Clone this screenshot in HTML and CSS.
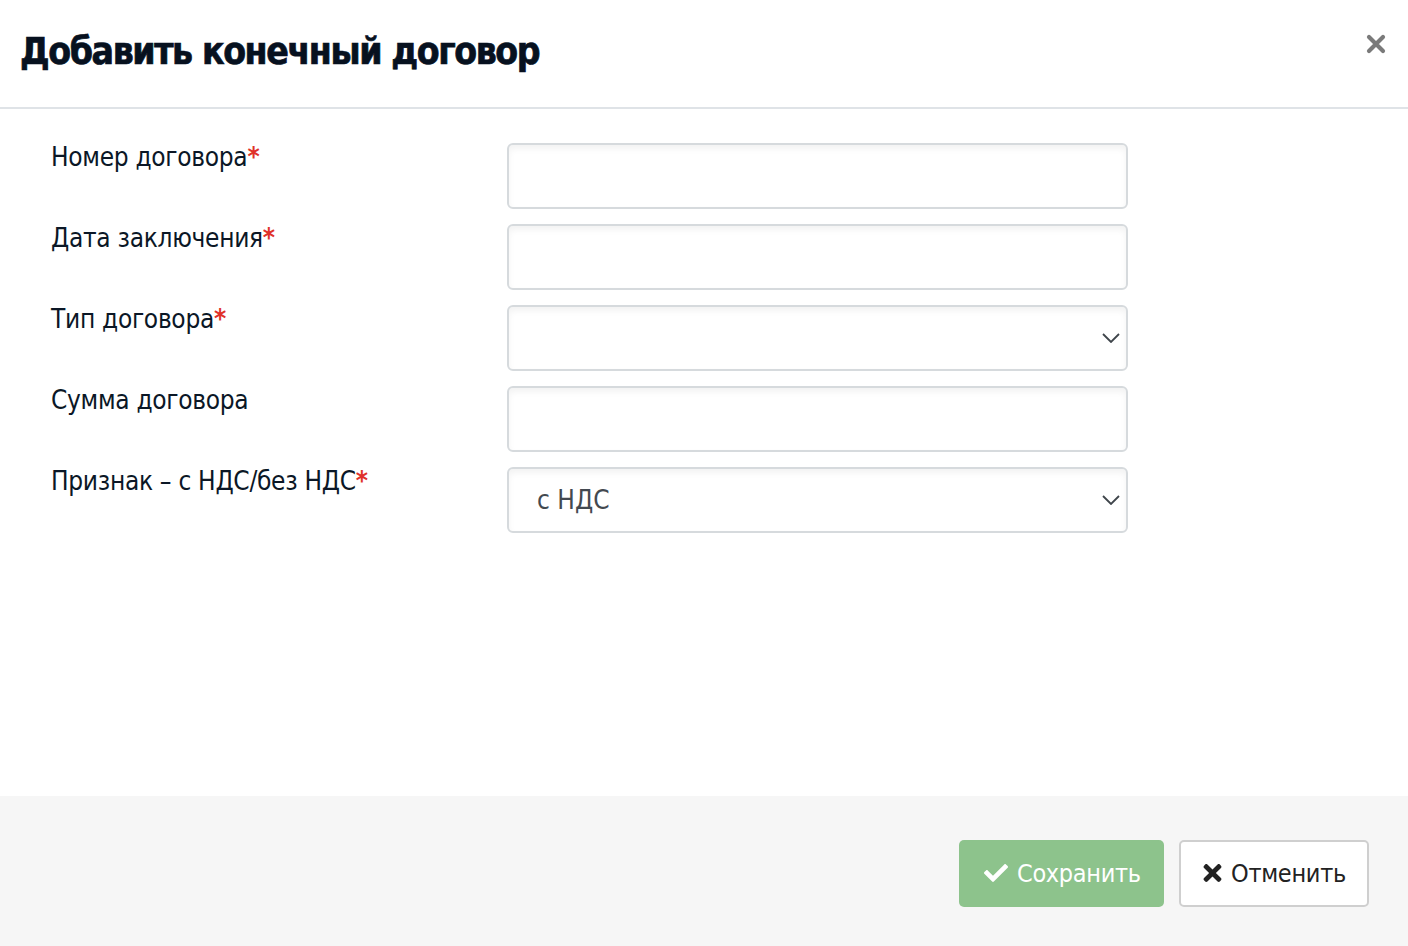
FILE: index.html
```html
<!DOCTYPE html>
<html lang="ru">
<head>
<meta charset="utf-8">
<link rel="stylesheet" href="styles.css">
</head>
<body>
<div class="modal">
  <div class="header">
    <h1 class="title">Добавить конечный договор</h1>
    <button class="close" aria-label="Закрыть">
      <svg viewBox="0 0 20 20" width="20" height="20"><path d="M3 3L17 17M17 3L3 17" stroke="#7a7a7a" stroke-width="4.2" stroke-linecap="round"/></svg>
    </button>
  </div>
  <div class="body">
    <div class="form">
      <label class="label">Номер договора<span class="req">*</span></label>
      <input class="control" type="text">
      <label class="label">Дата заключения<span class="req">*</span></label>
      <input class="control" type="text">
      <label class="label">Тип договора<span class="req">*</span></label>
      <div class="select-wrap">
        <select class="control select"><option></option></select>
        <svg class="chev" viewBox="0 0 18 10" width="18" height="10"><path d="M1 1L9 9L17 1" fill="none" stroke="#3f454b" stroke-width="1.8"/></svg>
      </div>
      <label class="label">Сумма договора</label>
      <input class="control" type="text">
      <label class="label">Признак – с НДС/без НДС<span class="req">*</span></label>
      <div class="select-wrap">
        <select class="control select"><option>с НДС</option></select>
        <svg class="chev" viewBox="0 0 18 10" width="18" height="10"><path d="M1 1L9 9L17 1" fill="none" stroke="#3f454b" stroke-width="1.8"/></svg>
      </div>
    </div>
  </div>
  <div class="footer">
    <button class="btn btn-save">
      <svg viewBox="0 0 512 512" width="24" height="24"><path fill="#fff" d="M173.898 439.404l-166.4-166.4c-9.997-9.997-9.997-26.206 0-36.204l36.203-36.204c9.997-9.998 26.207-9.998 36.204 0L192 312.69 432.095 72.596c9.997-9.997 26.207-9.997 36.204 0l36.203 36.204c9.997 9.997 9.997 26.206 0 36.204l-294.4 294.401c-9.998 9.997-26.207 9.997-36.204-.001z"/></svg>
      <span>Сохранить</span>
    </button>
    <button class="btn btn-cancel">
      <svg viewBox="0 0 352 512" width="19" height="26"><path fill="#222" d="M242.72 256l100.07-100.07c12.280-12.28 12.28-32.19 0-44.48l-22.24-22.24c-12.28-12.28-32.19-12.28-44.48 0L176 189.28 75.930 89.21c-12.28-12.28-32.19-12.28-44.48 0L9.21 111.45c-12.28 12.28-12.28 32.19 0 44.48L109.28 256 9.21 356.07c-12.28 12.28-12.28 32.19 0 44.48l22.24 22.24c12.28 12.28 32.2 12.28 44.48 0L176 322.72l100.07 100.07c12.28 12.28 32.2 12.28 44.48 0l22.24-22.24c12.28-12.28 12.28-32.19 0-44.48L242.72 256z"/></svg>
      <span>Отменить</span>
    </button>
  </div>
</div>
</body>
</html>
```
FILE: styles.css
```css
* { box-sizing: border-box; }
html, body { margin: 0; padding: 0; background: #fff; }
body {
  font-family: "DejaVu Sans Condensed", "DejaVu Sans", sans-serif;
  font-stretch: condensed;
  color: #0b1726;
}
.modal {
  width: 1408px;
  height: 946px;
  display: flex;
  flex-direction: column;
}
.header {
  height: 109px;
  border-bottom: 2px solid #dfe3e7;
  display: flex;
  align-items: center;
  justify-content: space-between;
  padding: 0 22px 4px 20px;
}
.title {
  margin: 0;
  font-size: 37px;
  font-weight: 900;
  letter-spacing: -1.4px;
  color: #07111f;
  -webkit-text-stroke: 0.7px #07111f;
}
.close {
  border: 0;
  background: none;
  padding: 0;
  margin-top: -16px;
  display: flex;
}
.body {
  flex: 1;
  padding: 34px 0 0 51px;
}
.form {
  display: grid;
  grid-template-columns: 456px 621px;
  grid-auto-rows: 66px;
  row-gap: 15px;
}
.label {
  font-size: 26px;
  line-height: 28px;
  letter-spacing: -0.3px;
  color: #0b1726;
}
.req { color: #e0312a; font-weight: bold; }
.control {
  width: 100%;
  height: 66px;
  border: 2px solid #d6dadd;
  border-radius: 6px;
  background: #fff;
  box-shadow: inset 0 4px 6px rgba(0,0,0,0.05);
  font-family: inherit;
  font-stretch: condensed;
  font-size: 26px;
  color: #434950;
  padding: 0 28px;
  outline: none;
}
.select-wrap { position: relative; }
.select { appearance: none; -webkit-appearance: none; }
.chev {
  position: absolute;
  right: 8px;
  top: 28px;
  pointer-events: none;
}
.footer {
  height: 150px;
  background: #f6f6f6;
  display: flex;
  justify-content: flex-end;
  align-items: center;
  padding: 4px 39px 0 0;
  gap: 15px;
}
.btn {
  height: 67px;
  border-radius: 5px;
  font-family: inherit;
  font-stretch: condensed;
  font-size: 25px;
  letter-spacing: -0.3px;
  display: flex;
  align-items: center;
  gap: 9px;
  cursor: pointer;
}
.btn-save {
  width: 205px;
  background: #8dc38c;
  border: 0;
  color: #fff;
  padding: 0 0 0 25px;
}
.btn-cancel {
  width: 190px;
  background: #fff;
  border: 2px solid #cfcfcf;
  color: #222;
  padding: 0 0 0 22px;
}
```
